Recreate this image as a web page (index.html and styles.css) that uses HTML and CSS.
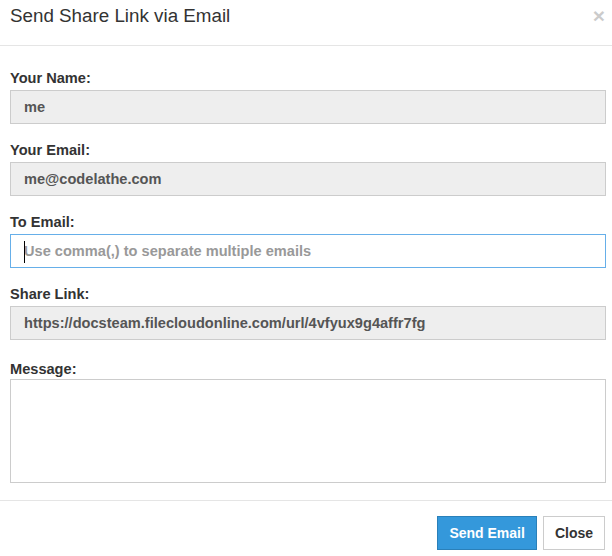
FILE: index.html
```html
<!DOCTYPE html>
<html>
<head>
<meta charset="utf-8">
<link rel="stylesheet" href="styles.css">
</head>
<body>
<div class="modal">
  <div class="modal-header">
    <h4 class="modal-title">Send Share Link via Email</h4>
    <span class="close">&times;</span>
  </div>
  <div class="modal-body">
    <div class="form-group">
      <label class="label">Your Name:</label>
      <div class="field readonly">me</div>
    </div>
    <div class="form-group">
      <label class="label">Your Email:</label>
      <div class="field readonly">me@codelathe.com</div>
    </div>
    <div class="form-group">
      <label class="label">To Email:</label>
      <div class="field focus"><span class="caret"></span><span class="placeholder">Use comma(,) to separate multiple emails</span></div>
    </div>
    <div class="form-group">
      <label class="label">Share Link:</label>
      <div class="field readonly">https://docsteam.filecloudonline.com/url/4vfyux9g4affr7fg</div>
    </div>
    <div class="form-group message">
      <label class="label">Message:</label>
      <div class="textarea"></div>
    </div>
  </div>
  <div class="modal-footer">
    <button class="btn btn-primary">Send Email</button>
    <button class="btn btn-default">Close</button>
  </div>
</div>
</body>
</html>
```
FILE: styles.css
```css
* { box-sizing: border-box; }
html, body { margin: 0; padding: 0; background: #fff; }
body {
  font-family: "Liberation Sans", Arial, Helvetica, sans-serif;
  font-size: 14.6px;
  color: #333;
}
.modal { width: 612px; }
.modal-header {
  display: flex;
  justify-content: space-between;
  align-items: flex-start;
  padding: 6px 7px 19px 10px;
  border-bottom: 1px solid #e5e5e5;
}
.modal-title {
  margin: 0;
  font-size: 18.8px;
  line-height: 20px;
  font-weight: normal;
  color: #333;
}
.close {
  font-size: 21px;
  font-weight: bold;
  line-height: 18px;
  color: #000;
  opacity: 0.2;
  margin-top: 1px;
}
.modal-body {
  padding: 22px 6px 17px 10px;
}
.form-group { margin-bottom: 16px; }
.form-group.message { margin-bottom: 0; padding-top: 3px; }
.label {
  display: block;
  font-weight: bold;
  line-height: 20px;
  margin-bottom: 2px;
}
.message .label { margin-bottom: 0; }
.field {
  position: relative;
  height: 34px;
  border: 1px solid #ccc;
  padding: 0 13px;
  display: flex;
  align-items: center;
  font-weight: bold;
  color: #555;
}
.field.readonly { background: #eee; }
.field.focus {
  border-color: #66afe9;
  background: #fff;
}
.placeholder { color: #999; }
.caret {
  position: absolute;
  left: 13px;
  top: 6px;
  width: 1px;
  height: 22px;
  background: #000;
}
.textarea {
  height: 104px;
  border: 1px solid #ccc;
  background: #fff;
}
.modal-footer {
  display: flex;
  justify-content: flex-end;
  gap: 6px;
  padding: 15px 7px 6px 10px;
  border-top: 1px solid #e5e5e5;
}
.btn {
  font-family: inherit;
  font-size: 14px;
  font-weight: bold;
  line-height: 20px;
  padding: 6px 11px;
  height: 34px;
  border: 1px solid transparent;
  border-radius: 0;
  cursor: pointer;
}
.btn-primary {
  background: #3498db;
  border-color: #2a80b9;
  color: #fff;
}
.btn-default {
  background: #fff;
  border-color: #ccc;
  color: #333;
}
```
